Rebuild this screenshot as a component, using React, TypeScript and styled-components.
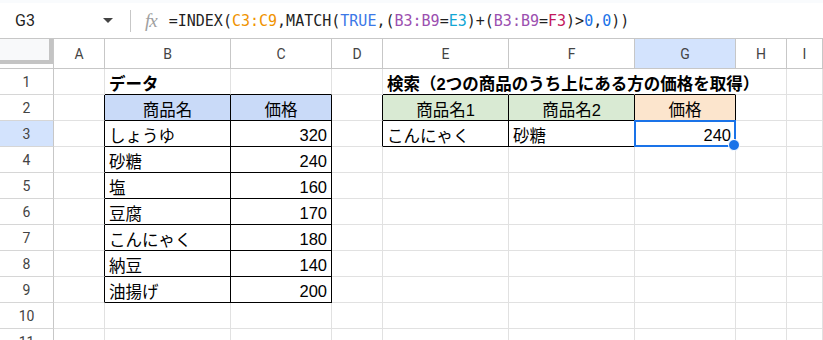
import styled, { createGlobalStyle } from "styled-components";

const GlobalStyle = createGlobalStyle`
  html, body {
    margin: 0;
    padding: 0;
    background: #fff;
  }
  body {
    font-family: "Liberation Sans", "Noto Sans CJK JP", sans-serif;
    overflow: hidden;
  }
`;

const Page = styled.div`
  width: 823px;
  height: 340px;
  overflow: hidden;
  display: flex;
  flex-direction: column;
  background: #fff;
  & > * {
    flex-shrink: 0;
  }
`;

const TopStrip = styled.div`
  height: 3px;
  background: #f9fbfd;
`;

const FormulaBar = styled.div`
  height: 36px;
  box-sizing: border-box;
  display: flex;
  align-items: center;
  border-bottom: 1px solid #c7c7c7;
`;

const NameBox = styled.div`
  width: 130px;
  box-sizing: border-box;
  padding: 0 15px;
  display: flex;
  align-items: center;
  justify-content: space-between;
  font-family: Roboto, "Liberation Sans", sans-serif;
  font-size: 16px;
  color: #1f1f1f;
`;

const Caret = styled.span`
  width: 0;
  height: 0;
  margin-right: 2px;
  border-left: 5px solid transparent;
  border-right: 5px solid transparent;
  border-top: 5px solid #444;
`;

const Divider = styled.div`
  width: 1px;
  height: 22px;
  background: #c7c7c7;
`;

const FxIcon = styled.span`
  margin: 0 12px 0 14px;
  font-family: "Liberation Serif", serif;
  font-style: italic;
  font-size: 19px;
  color: #a0a0a0;
  letter-spacing: -1px;
`;

const Formula = styled.div`
  font-family: "DejaVu Sans Mono", "Liberation Mono", monospace;
  font-size: 15px;
  color: #1f1f1f;
  white-space: nowrap;
`;

const Ref = styled.span<{ $color: string }>`
  color: ${p => p.$color};
`;

const Sheet = styled.div`
  display: grid;
  grid-template-columns: 54px 51px 126px 101px 51px 126px 126px 101px 51px 1fr;
  grid-template-rows: 30px repeat(11, 26px);
`;

const Corner = styled.div`
  box-sizing: border-box;
  border-right: 1px solid #c7c7c7;
  border-bottom: 1px solid #c7c7c7;
`;

const Freeze = styled.div`
  width: 53px;
  height: 25px;
  box-sizing: border-box;
  background: #f8f9fa;
  border-right: 4px solid #c4c4c4;
  border-bottom: 4px solid #c4c4c4;
`;

const Header = styled.div<{ $selected?: boolean; $row?: boolean }>`
  box-sizing: border-box;
  display: flex;
  align-items: center;
  justify-content: center;
  background: ${p => (p.$selected ? "#d3e3fd" : "#fff")};
  border-right: 1px solid #c7c7c7;
  border-bottom: 1px solid ${p => (p.$row ? "#d6d6d6" : "#c7c7c7")};
  font-family: Roboto, "Liberation Sans", sans-serif;
  font-size: 14px;
  color: #444;
`;

const Cell = styled.div<{
  $right: string;
  $bottom: string;
  $bg?: string;
  $align?: "left" | "center" | "right";
  $bold?: boolean;
  $overflow?: boolean;
  $raised?: boolean;
}>`
  position: relative;
  box-sizing: border-box;
  display: flex;
  align-items: center;
  justify-content: ${p =>
    p.$align === "right" ? "flex-end" : p.$align === "center" ? "center" : "flex-start"};
  padding: 3px 4px 0 4px;
  border-right: 1px solid ${p => p.$right};
  border-bottom: 1px solid ${p => p.$bottom};
  background: ${p => p.$bg ?? "#fff"};
  font-size: 16.5px;
  font-weight: ${p => (p.$bold ? 700 : 400)};
  color: #000;
  white-space: nowrap;
  overflow: ${p => (p.$overflow || p.$raised ? "visible" : "hidden")};
  z-index: ${p => (p.$raised ? 3 : p.$overflow ? 1 : "auto")};
`;

const Selection = styled.div`
  position: absolute;
  left: -1px;
  top: -1px;
  right: -1px;
  bottom: -1px;
  border: 2px solid #1a73e8;
  pointer-events: none;
`;

const Handle = styled.div`
  position: absolute;
  right: -6px;
  bottom: -6px;
  width: 10px;
  height: 10px;
  border-radius: 50%;
  background: #1a73e8;
  border: 1px solid #fff;
`;

const COLS = ["A", "B", "C", "D", "E", "F", "G", "H", "I"];
const GRID = "#e1e1e1";
const INK = "#000";

interface CellData {
  text: string;
  align?: "left" | "center" | "right";
  bold?: boolean;
  bg?: string;
  overflow?: boolean;
}

const BLUE = "#c9daf8";
const GREEN = "#d9ead3";
const PEACH = "#fce5cd";

const items: [string, number][] = [
  ["しょうゆ", 320],
  ["砂糖", 240],
  ["塩", 160],
  ["豆腐", 170],
  ["こんにゃく", 180],
  ["納豆", 140],
  ["油揚げ", 200],
];

// key: "row,col" with col 0 = A
const cells: Record<string, CellData> = {
  "1,1": { text: "データ", bold: true },
  "1,4": { text: "検索（2つの商品のうち上にある方の価格を取得）", bold: true, overflow: true },
  "2,1": { text: "商品名", align: "center", bg: BLUE },
  "2,2": { text: "価格", align: "center", bg: BLUE },
  "2,4": { text: "商品名1", align: "center", bg: GREEN },
  "2,5": { text: "商品名2", align: "center", bg: GREEN },
  "2,6": { text: "価格", align: "center", bg: PEACH },
  "3,4": { text: "こんにゃく" },
  "3,5": { text: "砂糖" },
  "3,6": { text: "240", align: "right" },
};
items.forEach(([name, price], i) => {
  cells[`${i + 3},1`] = { text: name };
  cells[`${i + 3},2`] = { text: String(price), align: "right" };
});

// bordered tables: B2:C9 and E2:G3
const inTable = (r: number, c: number) =>
  (r >= 2 && r <= 9 && c >= 1 && c <= 2) || (r >= 2 && r <= 3 && c >= 4 && c <= 6);

// overflow of the E1 title hides the gridlines it runs across
const hiddenRight = (r: number, c: number) => r === 1 && c >= 4 && c <= 6;

const rightColor = (r: number, c: number) => {
  if (inTable(r, c) || inTable(r, c + 1)) return INK;
  if (hiddenRight(r, c)) return "#fff";
  return GRID;
};
const bottomColor = (r: number, c: number) =>
  inTable(r, c) || inTable(r + 1, c) ? INK : GRID;

const ROWS = Array.from({ length: 11 }, (_, i) => i + 1);

export default function App() {
  return (
    <Page>
      <GlobalStyle />
      <TopStrip />
      <FormulaBar>
        <NameBox>
          <span>G3</span>
          <Caret />
        </NameBox>
        <Divider />
        <FxIcon>fx</FxIcon>
        <Formula>
          =INDEX(<Ref $color="#f09300">C3:C9</Ref>,MATCH(<Ref $color="#3b78e7">TRUE</Ref>,(
          <Ref $color="#9b4fb0">B3:B9</Ref>=<Ref $color="#11a6d4">E3</Ref>)+(
          <Ref $color="#9b4fb0">B3:B9</Ref>=<Ref $color="#c2185b">F3</Ref>)&gt;
          <Ref $color="#1a73e8">0</Ref>,<Ref $color="#1a73e8">0</Ref>))
        </Formula>
      </FormulaBar>
      <Sheet>
        <Corner>
          <Freeze />
        </Corner>
        {COLS.map(c => (
          <Header key={c} $selected={c === "G"}>
            {c}
          </Header>
        ))}
        {ROWS.map(r => [
          <Header key={`h${r}`} $row $selected={r === 3}>
            {r}
          </Header>,
          ...COLS.map((_, c) => {
            const d = cells[`${r},${c}`];
            const selected = r === 3 && c === 6;
            return (
              <Cell
                key={`${r},${c}`}
                $right={rightColor(r, c)}
                $bottom={bottomColor(r, c)}
                $bg={d?.bg}
                $align={d?.align}
                $bold={d?.bold}
                $overflow={d?.overflow}
                $raised={selected}
              >
                {d?.text}
                {selected && (
                  <Selection>
                    <Handle />
                  </Selection>
                )}
              </Cell>
            );
          }),
        ])}
      </Sheet>
    </Page>
  );
}
